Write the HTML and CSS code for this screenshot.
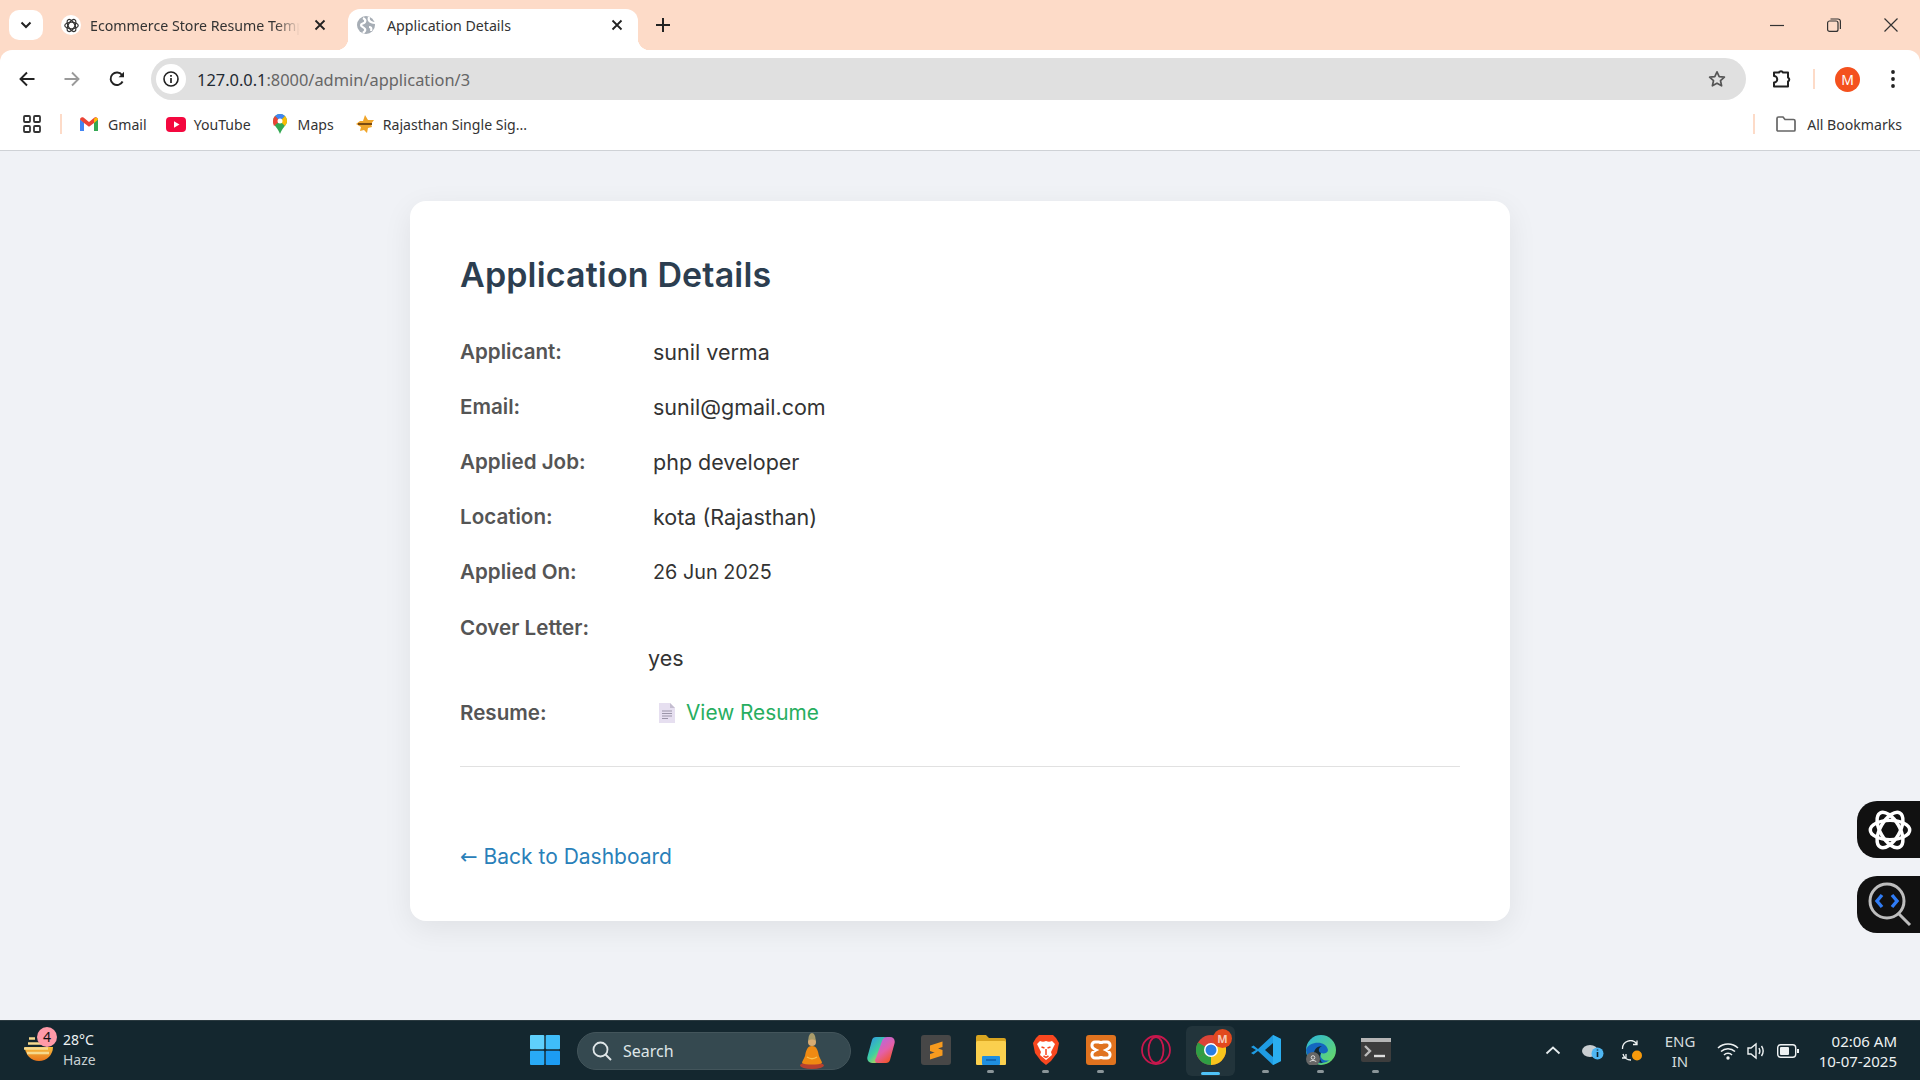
FILE: index.html
```html
<!DOCTYPE html>
<html lang="en">
<head>
<meta charset="utf-8">
<title>Application Details</title>
<link rel="stylesheet" href="styles.css">
</head>
<body>
<svg class="sprite" aria-hidden="true">
  <symbol id="knot" viewBox="0 0 48 48">
    <g fill="none" stroke="currentColor" stroke-width="3.8">
      <ellipse cx="24" cy="24" rx="21.500" ry="10.500"/>
      <ellipse cx="24" cy="24" rx="21.500" ry="10.500" transform="rotate(60 24 24)"/>
      <ellipse cx="24" cy="24" rx="21.500" ry="10.500" transform="rotate(120 24 24)"/>
    </g>
  </symbol>
</svg>
<div class="screen">
  <header class="browser">
    <div class="tabstrip">
      <button class="tab-search"><svg width="12" height="8" viewBox="0 0 12 8"><path d="M1.500 1.500 6 6l4.500-4.500" fill="none" stroke="#222" stroke-width="2"/></svg></button>
      <div class="tab">
        <span class="tab-fav-white"><svg width="15" height="15"><use href="#knot"/></svg></span>
        <span class="tab-title tab-title-fade">Ecommerce Store Resume Template</span>
        <svg class="tab-x" width="12" height="12" viewBox="0 0 12 12"><path d="M1.500 1.500l9 9m0-9l-9 9" stroke="#222" stroke-width="1.800"/></svg>
      </div>
      <div class="tab tab-active">
        <svg class="tab-globe" width="18" height="18" viewBox="0 0 18 18"><circle cx="9" cy="9" r="9" fill="#a6adb5"/><path d="M6 2c2 1 3 2 2 4S4 7 4 9s3 2 4 4-1 3-2 4M12 1c-1 3 0 4 2 5s3 1 4 1M12 11c2 0 3 1 2 4" fill="none" stroke="#fff" stroke-width="2.200"/></svg>
        <span class="tab-title">Application Details</span>
        <svg class="tab-x" width="12" height="12" viewBox="0 0 12 12"><path d="M1.500 1.500l9 9m0-9l-9 9" stroke="#222" stroke-width="1.800"/></svg>
      </div>
      <svg class="tab-new" width="14" height="14" viewBox="0 0 14 14"><path d="M7 0v14M0 7h14" stroke="#222" stroke-width="2"/></svg>
      <div class="window-controls">
        <svg width="14" height="14" viewBox="0 0 14 14"><path d="M0 7.500h14" stroke="#333" stroke-width="1.200"/></svg>
        <svg width="14" height="14" viewBox="0 0 14 14"><rect x=".6" y="3" width="10.400" height="10.400" rx="2" fill="none" stroke="#333" stroke-width="1.200"/><path d="M3.500 1h7.500a2.400 2.400 0 0 1 2.400 2.400V11" fill="none" stroke="#333" stroke-width="1.200"/></svg>
        <svg width="14" height="14" viewBox="0 0 14 14"><path d="M.5.5l13 13m0-13l-13 13" stroke="#333" stroke-width="1.200"/></svg>
      </div>
    </div>
    <div class="toolbar">
      <div class="nav-btns">
        <svg width="16" height="16" viewBox="0 0 16 16"><path d="M15.500 8H2M8 1.500 1.500 8 8 14.500" fill="none" stroke="#222" stroke-width="1.900"/></svg>
        <svg width="16" height="16" viewBox="0 0 16 16"><path d="M.5 8H14M8 1.500 14.500 8 8 14.500" fill="none" stroke="#9a9a9a" stroke-width="1.900"/></svg>
        <svg width="16" height="16" viewBox="0 0 16 16"><path d="M13.600 10.500A6.300 6.300 0 1 1 13 4" fill="none" stroke="#222" stroke-width="1.900"/><path d="M15 .8v5.400H9.600z" fill="#222"/></svg>
      </div>
      <div class="omnibox">
        <span class="site-info"><svg width="16" height="16" viewBox="0 0 16 16"><circle cx="8" cy="8" r="7" fill="none" stroke="#222" stroke-width="1.600"/><path d="M8 7v5M8 4v1.700" stroke="#222" stroke-width="1.700"/></svg></span>
        <span class="url"><span class="url-host">127.0.0.1</span>:8000/admin/application/3</span>
        <svg class="star" width="18" height="18" viewBox="0 0 18 18"><path d="M9 1.800l2.200 4.800 5.200.6-3.900 3.500 1.100 5.100L9 13.200l-4.600 2.600 1.100-5.100L1.600 7.200l5.200-.6z" fill="none" stroke="#555" stroke-width="1.700" stroke-linejoin="round"/></svg>
      </div>
      <div class="toolbar-end">
        <svg width="20" height="20" viewBox="0 0 20 20"><path d="M2 3.500h5a2.200 2.200 0 0 1 4 0h5v5a2.200 2.200 0 0 1 0 4v5H2v-4a2.500 2.500 0 0 0 0-6.500z" fill="none" stroke="#222" stroke-width="2" stroke-linejoin="round"/></svg>
        <span class="bar-sep"></span>
        <span class="avatar">M</span>
        <svg width="4" height="18" viewBox="0 0 4 18"><circle cx="2" cy="2" r="1.900" fill="#222"/><circle cx="2" cy="9" r="1.900" fill="#222"/><circle cx="2" cy="16" r="1.900" fill="#222"/></svg>
      </div>
    </div>
    <nav class="bookmarks">
      <svg class="apps" width="18" height="18" viewBox="0 0 18 18"><g fill="none" stroke="#333" stroke-width="1.800"><rect x="1" y="1" width="6" height="6" rx="1"/><rect x="11" y="1" width="6" height="6" rx="1"/><rect x="1" y="11" width="6" height="6" rx="1"/><rect x="11" y="11" width="6" height="6" rx="1"/></g></svg>
      <span class="bar-sep bar-sep-apps"></span>
      <a class="bm bm-gmail"><svg width="18" height="14" viewBox="0 0 18 14"><path d="M0 2.500V14h4V5z" fill="#4285f4"/><path d="M14 14h4V2.500L14 5z" fill="#34a853"/><path d="M0 2.500C0 .5 2 -.5 3.500.6L9 5l5.500-4.400C16-.5 18 .5 18 2.500L14 6 9 9.800 4 6z" fill="#ea4335"/><path d="M14 1.800l2-1.300C17 .5 18 1.500 18 2.500L14 6z" fill="#fbbc04"/></svg>Gmail</a>
      <a class="bm bm-yt"><svg width="20" height="15" viewBox="0 0 20 15"><rect width="20" height="15" rx="4" fill="#f4083f"/><path d="M8 4.200v6.600l5.500-3.300z" fill="#fff"/></svg>YouTube</a>
      <a class="bm bm-maps"><svg width="14" height="20" viewBox="0 0 14 20"><path d="M7 0a7 7 0 0 1 7 7c0 4-5 7-7 13-2-6-7-9-7-13a7 7 0 0 1 7-7z" fill="#34a853"/><path d="M7 0a7 7 0 0 1 5 2L7 7 2 2a7 7 0 0 1 5-2z" fill="#4285f4"/><path d="M2 2l5 5-6 5C.4 10.500 0 9 0 7a7 7 0 0 1 2-5z" fill="#ea4335"/><path d="M12 2a7 7 0 0 1 2 5c0 2-1 3.500-2 5L7 7z" fill="#fbbc04"/><circle cx="7" cy="7" r="2.500" fill="#fff"/></svg>Maps</a>
      <a class="bm bm-raj"><svg width="20" height="20" viewBox="0 0 20 20"><path d="M10 1l3 5h6l-3 4 1 3-4 1-1 5-3-3-4 1 1-4-5-3 4-3h3z" fill="#f0a52a"/><path d="M3 9h14v2H3z" fill="#7a4a12"/></svg>Rajasthan Single Sig...</a>
      <span class="bar-sep bar-sep-end"></span>
      <a class="bm bm-all"><svg width="20" height="16" viewBox="0 0 20 16"><path d="M1 14V2.500A1.500 1.500 0 0 1 2.500 1H7l2 2.500h8.500A1.500 1.500 0 0 1 19 5v9a1 1 0 0 1-1 1H2a1 1 0 0 1-1-1z" fill="none" stroke="#666" stroke-width="1.700"/></svg>All Bookmarks</a>
    </nav>
  </header>

  <main class="page">
    <section class="card">
      <h1 class="card-title">Application Details</h1>
      <div class="row"><span class="label">Applicant:</span><span class="value">sunil verma</span></div>
      <div class="row"><span class="label">Email:</span><span class="value">sunil@gmail.com</span></div>
      <div class="row"><span class="label">Applied Job:</span><span class="value">php developer</span></div>
      <div class="row"><span class="label">Location:</span><span class="value">kota (Rajasthan)</span></div>
      <div class="row"><span class="label">Applied On:</span><span class="value value-date">26 Jun 2025</span></div>
      <div class="row row-cover"><span class="label">Cover Letter:</span><div class="value cover-text">yes</div></div>
      <div class="row"><span class="label">Resume:</span><a class="resume-link"><svg class="doc" width="16" height="20" viewBox="0 0 16 20"><path d="M0 0h11l5 5v15H0z" fill="#e6dff0"/><path d="M11 0l5 5h-5z" fill="#c4bdd0"/><path d="M3 8h10M3 10.500h10M3 13h10M3 15.500h6" stroke="#9b95a8" stroke-width="1"/></svg>View Resume</a></div>
      <hr class="rule">
      <a class="back-link"><span class="back-arrow">←</span> Back to Dashboard</a>
    </section>
    <div class="side-btn side-btn-a"><svg width="44" height="44"><use href="#knot"/></svg></div>
    <div class="side-btn side-btn-b"><svg width="44" height="46" viewBox="0 0 44 46"><circle cx="19" cy="19" r="17" fill="none" stroke="#bdbdbd" stroke-width="3"/><path d="M31 32l11 11" stroke="#bdbdbd" stroke-width="3"/><path d="M14 13l-5 6 5 6M24 13l5 6-5 6" fill="none" stroke="#2f7cf6" stroke-width="3.400"/></svg></div>
  </main>

  <footer class="taskbar">
    <div class="weather">
      <svg class="weather-icon" width="32" height="34" viewBox="0 0 32 34"><defs><linearGradient id="sunG" x1="0" y1="0" x2="0" y2="1"><stop offset="0" stop-color="#f7bd3e"/><stop offset="1" stop-color="#e9761c"/></linearGradient></defs><path d="M3 14a14 14 0 0 0 28 0z" fill="url(#sunG)"/><path d="M7 5.500h6M6 10.500h16M2 15.500h24M5 20h22" stroke="#f6d98e" stroke-width="2.400"/></svg>
      <span class="weather-badge">4</span>
      <div class="weather-text"><span>28°C</span><span class="weather-sub">Haze</span></div>
    </div>
    <div class="task-item">
      <svg width="30" height="30" viewBox="0 0 30 30"><rect x="0" y="0" width="14.300" height="14.300" rx="1" fill="#5fd0fb"/><rect x="15.700" y="0" width="14.300" height="14.300" rx="1" fill="#3fbdf9"/><rect x="0" y="15.700" width="14.300" height="14.300" rx="1" fill="#29aaf6"/><rect x="15.700" y="15.700" width="14.300" height="14.300" rx="1" fill="#1c9cf3"/></svg>
    </div>
    <div class="searchbox">
      <svg width="20" height="20" viewBox="0 0 20 20"><circle cx="8.500" cy="8.500" r="7" fill="none" stroke="#dfe6e8" stroke-width="1.800"/><path d="M13.500 13.500l5.500 5.500" stroke="#dfe6e8" stroke-width="2"/></svg>
      <span class="search-text">Search</span>
      <svg class="buddha" width="24" height="36" viewBox="0 0 24 36"><ellipse cx="12" cy="32.500" rx="12" ry="3.500" fill="#b8412f"/><path d="M12 13c5 0 6 5 7 10 1 3 3 5 3 7-3 2-17 2-20 0 0-2 2-4 3-7 1-5 2-10 7-10z" fill="#ef8a12"/><path d="M7 24c3 2 7 2 10 0" fill="none" stroke="#f9c04d" stroke-width="1.500"/><circle cx="12" cy="9" r="4" fill="#d8ab72"/><path d="M8.500 8c-.5-5 1.500-8 3.500-8s4 3 3.500 8c-1-2-6-2-7 0z" fill="#a89b6a"/></svg>
    </div>
    <div class="task-item">
      <svg width="28" height="26" viewBox="0 0 28 26"><defs><linearGradient id="cpA" x1="0" y1="0" x2=".8" y2="1"><stop offset="0" stop-color="#2b8ff0"/><stop offset=".55" stop-color="#3fd0a0"/><stop offset="1" stop-color="#f6cf2e"/></linearGradient><linearGradient id="cpB" x1="0" y1="0" x2=".6" y2="1"><stop offset="0" stop-color="#a66cf0"/><stop offset=".6" stop-color="#e45fa8"/><stop offset="1" stop-color="#f2552f"/></linearGradient></defs><path d="M9 0h8c2 0 3 1 3 3l-1 2-6 17c-.8 2.500-3 4-5 4H5c-3.500 0-5.500-3-4.500-6.500L5 3c.5-2 2-3 4-3z" fill="url(#cpA)"/><path d="M19 26h-8c-2 0-3-1-3-3l1-2 6-17c.8-2.500 3-4 5-4h3c3.500 0 5.500 3 4.500 6.500L23 23c-.5 2-2 3-4 3z" fill="url(#cpB)"/></svg>
    </div>
    <div class="task-item">
      <svg width="30" height="30" viewBox="0 0 30 30"><rect width="30" height="30" rx="3" fill="#474747"/><path d="M9 10.500 21.500 6.500v5.500L9 16zM9 19 21.500 15v5.500L9 24.500zM9 10.500 21.500 15v5.500L9 16z" fill="#f79a1e"/></svg>
    </div>
    <div class="task-item has-dot">
      <svg width="30" height="30" viewBox="0 0 30 30"><path d="M0 2a2 2 0 0 1 2-2h8l3 3h15a2 2 0 0 1 2 2v23a2 2 0 0 1-2 2H2a2 2 0 0 1-2-2z" fill="#d9a520"/><rect y="6" width="30" height="24" rx="1.500" fill="#fbd04e"/><rect x="6" y="21" width="18" height="9" rx="1" fill="#1f8fe0"/><path d="M10 25h10" stroke="#0f5ea8" stroke-width="1.500"/></svg>
    </div>
    <div class="task-item has-dot">
      <svg width="26" height="30" viewBox="0 0 26 30"><path d="M6 0h14l3 3 3 5-2 10-6 8-5 4-5-4-6-8L0 8l3-5z" fill="#f9471f"/><path d="M7 6c2 1 4 1 6 0 2 1 4 1 6 0l3 3-4 8 1 3-6 5-6-5 1-3-4-8z" fill="#fff"/><path d="M8.500 12l3 1M17.500 12l-3 1M13 14v6M10.500 21l2.500 1.500 2.500-1.500" fill="none" stroke="#f9471f" stroke-width="1.500"/></svg>
    </div>
    <div class="task-item has-dot">
      <svg width="30" height="30" viewBox="0 0 30 30"><rect width="30" height="30" rx="3" fill="#e0731f"/><path d="M9 7h3.500c1.500 0 2.500 1 2.500 2 0-1 1-2 2.500-2H21a3 3 0 0 1 3 3v1c0 2-2 3-4 4 2 1 4 2 4 4v1a3 3 0 0 1-3 3h-3.500c-1.500 0-2.500-1-2.500-2 0 1-1 2-2.500 2H9a3 3 0 0 1-3-3v-1c0-2 2-3 4-4-2-1-4-2-4-4v-1a3 3 0 0 1 3-3z" fill="none" stroke="#fff" stroke-width="3"/></svg>
    </div>
    <div class="task-item">
      <svg width="30" height="30" viewBox="0 0 30 30"><g fill="none" stroke="#c8174d"><circle cx="15" cy="15" r="14" stroke-width="1.800"/><ellipse cx="15" cy="15" rx="7.500" ry="13" stroke-width="1.800"/></g></svg>
    </div>
    <div class="task-item task-active">
      <svg width="30" height="30" viewBox="0 0 30 30"><circle cx="15" cy="15" r="15" fill="#db4437"/><path d="M15 15 2 22.500A15 15 0 0 1 2 7.500z" fill="#2f9e44"/><path d="M15 15 28 7.500A15 15 0 0 1 15 30z" fill="#f8c51c"/><path d="M15 15 15 30a15 15 0 0 1-13-7.500z" fill="#2f9e44"/><circle cx="15" cy="15" r="7" fill="#fff"/><circle cx="15" cy="15" r="5.500" fill="#2a7de1"/></svg>
      <span class="task-badge">M</span>
      <span class="active-bar"></span>
    </div>
    <div class="task-item has-dot">
      <svg width="30" height="30" viewBox="0 0 30 30"><path d="M22 0l8 4v22l-8 4L7 16l-4.500 3.500L0 18l5-3-5-3 2.500-1.500L7 14z" fill="#1f9ce3"/><path d="M22 8l-8 7 8 7z" fill="#14272e"/><path d="M22 0l8 4v22l-8 4z" fill="#2aaef0"/></svg>
    </div>
    <div class="task-item has-dot">
      <svg width="30" height="30" viewBox="0 0 30 30"><defs><linearGradient id="edgeG" x1="0" y1="0" x2="1" y2="1"><stop offset="0" stop-color="#2ab5de"/><stop offset="1" stop-color="#6cdc5a"/></linearGradient></defs><circle cx="15" cy="15" r="15" fill="url(#edgeG)"/><path d="M0 15C3 6 20 5 22 15c0 3-4 4-7 3-2 5 3 9 9 7a15 15 0 0 1-24-10z" fill="#1466c0"/><path d="M15 18c-3-1-3-5 1-7-5 0-9 4-8 10 1 4 5 7 9 7-3-2-4-6-2-10z" fill="#14272e"/><circle cx="7" cy="24" r="7" fill="#666"/><circle cx="7" cy="22.500" r="1.800" fill="none" stroke="#ddd"/><path d="M3.800 27c.5-2 5.900-2 6.400 0" fill="none" stroke="#ddd"/></svg>
    </div>
    <div class="task-item has-dot">
      <svg width="30" height="24" viewBox="0 0 30 24"><rect width="30" height="24" rx="2" fill="#3d3d3d"/><rect width="30" height="4" fill="#b5b5b5"/><path d="M4 8l5 5-5 5" fill="none" stroke="#bbb" stroke-width="2.400"/><path d="M13 18h11" stroke="#ddd" stroke-width="2.400"/></svg>
    </div>
    <div class="tray">
      <span class="tray-item tray-caret"><svg width="16" height="9" viewBox="0 0 16 9"><path d="M1.500 7.500 8 1.500l6.500 6" fill="none" stroke="#e6ecee" stroke-width="1.800"/></svg></span>
      <span class="tray-item tray-cloud"><svg width="22" height="18" viewBox="0 0 22 18"><ellipse cx="8" cy="9" rx="8" ry="6" fill="#c9ced1"/><circle cx="15.500" cy="11.500" r="6" fill="#4fb7f3"/><path d="M15.500 10v5M15.500 7.600v1" stroke="#10212a" stroke-width="1.600"/></svg></span>
      <span class="tray-item tray-sync"><svg width="22" height="22" viewBox="0 0 22 22"><path d="M1.500 9A8 8 0 0 1 16 4M16 .5V4.500h-4M5 14v4H1M2 14a8 8 0 0 0 8 6" fill="none" stroke="#eef2f3" stroke-width="1.300"/><circle cx="16" cy="15.500" r="5" fill="#f79a0c"/></svg></span>
      <span class="tray-item tray-lang"><span>ENG</span><span>IN</span></span>
      <span class="tray-item tray-wifi"><svg width="22" height="18" viewBox="0 0 22 18"><path d="M1 6a14.500 14.500 0 0 1 20 0M4 9.500a10 10 0 0 1 14 0M7 13a5.500 5.500 0 0 1 8 0" fill="none" stroke="#eef2f3" stroke-width="1.500"/><circle cx="11" cy="16" r="1.700" fill="#eef2f3"/></svg></span>
      <span class="tray-item tray-vol"><svg width="20" height="18" viewBox="0 0 20 18"><path d="M1 6h3l5-4v14l-5-4H1z" fill="none" stroke="#eef2f3" stroke-width="1.400"/><path d="M12 6c1.200 2 1.200 4 0 6M14.500 4c2 3 2 7 0 10" fill="none" stroke="#eef2f3" stroke-width="1.400"/></svg></span>
      <span class="tray-item tray-batt"><svg width="22" height="14" viewBox="0 0 22 14"><rect x=".7" y=".7" width="18" height="12.600" rx="3" fill="none" stroke="#eef2f3" stroke-width="1.400"/><rect x="3" y="3" width="9" height="8" rx="1" fill="#eef2f3"/><rect x="20" y="5" width="2" height="4" fill="#eef2f3"/></svg></span>
      <div class="clock"><span>02:06 AM</span><span>10-07-2025</span></div>
    </div>
  </footer>
</div>
</body>
</html>
```
FILE: styles.css
```css
* { box-sizing: border-box; }
html, body { margin: 0; padding: 0; height: 100%; overflow: hidden; }
body { font-family: "Noto Sans", "Open Sans", sans-serif; color: #222; }
svg { display: block; flex: none; }
.sprite { display: none; }
.screen { width: 1920px; height: 1080px; display: flex; flex-direction: column; background: #f0f2f6; }

/* browser frame */
.browser { flex: none; background: #fddbc8; border-bottom: 1px solid #cfd2d6; }
.tabstrip { height: 50px; display: flex; align-items: flex-end; padding-left: 9px; position: relative; }
.tab-search { width: 34px; height: 30px; margin-bottom: 10px; border: 0; padding: 0; background: #fff; border-radius: 10px; display: flex; align-items: center; justify-content: center; }
.tab { width: 299px; height: 41px; margin-left: 7px; display: flex; align-items: center; padding: 0 23px 9px 11px; font-size: 14.2px; position: relative; color: #333; }
.tab-active { width: 290px; background: #fff; border-radius: 12px 12px 0 0; padding: 0 15px 9px 9px; margin-left: -1px; color: #333; }
.tab-active::before, .tab-active::after { content: ""; position: absolute; bottom: 0; width: 12px; height: 12px; }
.tab-active::before { left: -12px; background: radial-gradient(circle at 0 0, transparent 12px, #fff 12.500px); }
.tab-active::after { right: -12px; background: radial-gradient(circle at 100% 0, transparent 12px, #fff 12.500px); }
.tab-fav-white { width: 20px; height: 20px; border-radius: 50%; background: #fff; display: flex; align-items: center; justify-content: center; color: #333; flex: none; }
.tab-globe { margin-right: 12px; }
.tab .tab-fav-white { margin-right: 9px; }
.tab-title { flex: 1; white-space: nowrap; overflow: hidden; }
.tab-title-fade { -webkit-mask-image: linear-gradient(to right, #000 88%, transparent 100%); mask-image: linear-gradient(to right, #000 88%, transparent 100%); margin-right: 14px; }
.tab-new { margin: 0 0 18px 18px; }
.window-controls { margin-left: auto; align-self: flex-start; display: flex; gap: 43px; padding: 18px 22px 0 0; }

.toolbar { height: 58px; background: #fff; border-radius: 12px 12px 0 0; display: flex; align-items: center; position: relative; }
.nav-btns { width: 151px; display: flex; gap: 29px; padding-left: 19px; }
.omnibox { width: 1595px; height: 42px; background: #e0e0e0; border-radius: 21px; display: flex; align-items: center; padding: 0 20px 0 5px; }
.site-info { width: 30px; height: 30px; background: #fff; border-radius: 50%; display: flex; align-items: center; justify-content: center; }
.url { margin-left: 11px; font-size: 16.4px; color: #666; flex: 1; white-space: nowrap; }
.url-host { color: #1f2a33; }
.toolbar-end { flex: 1; display: flex; align-items: center; padding-left: 26px; }
.bar-sep { display: block; width: 2px; height: 20px; background: #fddbc8; flex: none; margin-left: 21px; margin-right: 21px; }
.avatar { width: 25px; height: 25px; margin-right: 31px; margin-left: -1px; border-radius: 50%; background: #f4511e; color: #fff; font-size: 14px; display: flex; align-items: center; justify-content: center; flex: none; }

.bookmarks { height: 42px; padding: 0 0 10px 23px; background: #fff; display: flex; align-items: center; font-size: 14.1px; }
.apps { margin-right: 19px; }
.bar-sep-apps { margin: 0 18px 0 0; }
.bm { display: flex; align-items: center; color: #333; white-space: nowrap; }
.bm-gmail { gap: 10px; margin-right: 19px; }
.bm-yt { gap: 8px; margin-right: 22px; }
.bm-maps { gap: 11px; margin-right: 21px; }
.bm-raj { gap: 8px; }
.bar-sep-end { margin-left: auto; margin-right: 21px; }
.bm-all { gap: 11px; padding-right: 18px; }

/* page */
.page { flex: 1; min-height: 0; padding-top: 50px; position: relative; }
.card { width: 1100px; height: 720px; margin: 0 auto; padding: 50px; background: #fff; border-radius: 16px; box-shadow: 0 8px 30px rgba(0, 0, 0, .07); font-family: "Inter", "Open Sans", sans-serif; font-size: 21.5px; line-height: 30px; color: #333; }
.card-title { margin: 0 0 38px; font-size: 34px; line-height: 48px; font-weight: 600; color: #2c3e50; letter-spacing: .15px; }
.row { margin-bottom: 25px; display: flex; }
.row-cover { display: block; }
.label { width: 193px; flex: none; font-size: 20.6px; font-weight: 600; color: #555; display: inline-block; }
.value { color: #333; }
.value-date { font-size: 19.8px; }
.cover-text { padding-left: 188px; }
.resume-link { display: flex; align-items: center; gap: 11px; padding-left: 6px; font-size: 20.8px; color: #27ae60; }
.rule { height: 1px; margin: 38px 0 75px; padding: 0; border: 0; background: #e1e1e1; }
.back-link { color: #2980b9; display: block; font-size: 21px; }
.back-arrow { font-family: "DejaVu Sans", sans-serif; }
.side-btn { position: absolute; right: 0; width: 63px; height: 57px; background: #111; border-radius: 20px 0 0 20px; color: #fff; display: flex; align-items: center; padding-left: 11px; }
.side-btn-a { top: 650px; }
.side-btn-b { top: 725px; }

/* taskbar */
.taskbar { flex: none; height: 60px; background: #14272f; border-top: 1px solid #2b3a40; color: #eef2f3; display: flex; align-items: center; position: relative; }
.weather { width: 517px; display: flex; align-items: center; padding: 0 0 2px 22px; position: relative; font-size: 14px; line-height: 20px; }
.weather-icon { margin-right: 9px; }
.weather-badge { position: absolute; left: 37px; top: -3px; width: 20px; height: 20px; border-radius: 50%; background: #ff9aa8; color: #111; font-size: 14px; line-height: 20px; text-align: center; }
.weather-text { display: flex; flex-direction: column; }
.weather-sub { color: #c8d0d3; }
.task-item { width: 55px; height: 59px; padding-bottom: 1px; flex: none; display: flex; align-items: center; justify-content: center; position: relative; }
.has-dot::after { content: ""; position: absolute; left: 24px; bottom: 7px; width: 7px; height: 3px; border-radius: 2px; background: #8a9599; }
.task-active { background: #22343b; border-radius: 6px; width: 49px; height: 50px; margin: 0 3px; }
.task-badge { position: absolute; right: 3px; top: 3px; width: 19px; height: 19px; border-radius: 50%; background: #e2491e; color: #f5c9b8; font-size: 11px; font-weight: 700; text-align: center; line-height: 19px; }
.active-bar { position: absolute; left: 15px; bottom: 1px; width: 19px; height: 3px; border-radius: 2px; background: #4fc3f7; }
.searchbox { width: 274px; height: 38px; flex: none; margin: 0 2px 0 5px; background: #354950; border: 1px solid #43555b; border-radius: 19px; display: flex; align-items: center; padding: 0 26px 0 14px; font-size: 16px; color: #dfe6e8; }
.search-text { margin-left: 11px; flex: 1; }
.tray { margin-left: auto; width: 387px; display: flex; align-items: center; padding-right: 23px; font-size: 15px; }
.tray-item { display: flex; align-items: center; justify-content: center; flex: none; }
.tray-caret { width: 40px; }
.tray-cloud { width: 39px; }
.tray-sync { width: 40px; }
.tray-lang { width: 56px; flex-direction: column; line-height: 20px; color: #d5dbdd; }
.tray-wifi { width: 37px; margin-left: 1px; }
.tray-vol { width: 21px; }
.tray-batt { width: 41px; }
.clock { margin-left: auto; display: flex; flex-direction: column; align-items: flex-end; line-height: 20px; }
```
